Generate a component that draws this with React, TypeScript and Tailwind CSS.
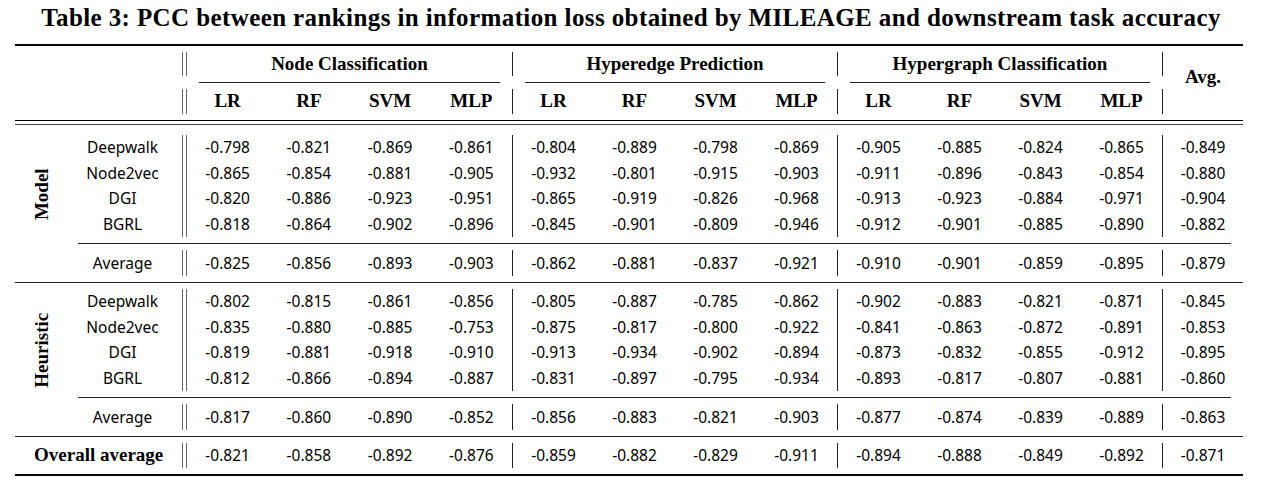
import React from "react";

type Row = { name: string; vals: string[] };

const modelRows: Row[] = [
  { name: "Deepwalk", vals: ["-0.798", "-0.821", "-0.869", "-0.861", "-0.804", "-0.889", "-0.798", "-0.869", "-0.905", "-0.885", "-0.824", "-0.865", "-0.849"] },
  { name: "Node2vec", vals: ["-0.865", "-0.854", "-0.881", "-0.905", "-0.932", "-0.801", "-0.915", "-0.903", "-0.911", "-0.896", "-0.843", "-0.854", "-0.880"] },
  { name: "DGI", vals: ["-0.820", "-0.886", "-0.923", "-0.951", "-0.865", "-0.919", "-0.826", "-0.968", "-0.913", "-0.923", "-0.884", "-0.971", "-0.904"] },
  { name: "BGRL", vals: ["-0.818", "-0.864", "-0.902", "-0.896", "-0.845", "-0.901", "-0.809", "-0.946", "-0.912", "-0.901", "-0.885", "-0.890", "-0.882"] },
];
const modelAvg: Row = { name: "Average", vals: ["-0.825", "-0.856", "-0.893", "-0.903", "-0.862", "-0.881", "-0.837", "-0.921", "-0.910", "-0.901", "-0.859", "-0.895", "-0.879"] };

const heurRows: Row[] = [
  { name: "Deepwalk", vals: ["-0.802", "-0.815", "-0.861", "-0.856", "-0.805", "-0.887", "-0.785", "-0.862", "-0.902", "-0.883", "-0.821", "-0.871", "-0.845"] },
  { name: "Node2vec", vals: ["-0.835", "-0.880", "-0.885", "-0.753", "-0.875", "-0.817", "-0.800", "-0.922", "-0.841", "-0.863", "-0.872", "-0.891", "-0.853"] },
  { name: "DGI", vals: ["-0.819", "-0.881", "-0.918", "-0.910", "-0.913", "-0.934", "-0.902", "-0.894", "-0.873", "-0.832", "-0.855", "-0.912", "-0.895"] },
  { name: "BGRL", vals: ["-0.812", "-0.866", "-0.894", "-0.887", "-0.831", "-0.897", "-0.795", "-0.934", "-0.893", "-0.817", "-0.807", "-0.881", "-0.860"] },
];
const heurAvg: Row = { name: "Average", vals: ["-0.817", "-0.860", "-0.890", "-0.852", "-0.856", "-0.883", "-0.821", "-0.903", "-0.877", "-0.874", "-0.839", "-0.889", "-0.863"] };

const overall: Row = { name: "Overall average", vals: ["-0.821", "-0.858", "-0.892", "-0.876", "-0.859", "-0.882", "-0.829", "-0.911", "-0.894", "-0.888", "-0.849", "-0.892", "-0.871"] };

const serifBold = "font-['Liberation_Serif',serif] font-bold";
const sans = "font-['Noto_Sans',sans-serif]";

const DoubleBar = () => <div className="w-[5px] self-stretch border-x border-[#666]" />;
const Bar = () => <div className="w-px self-stretch bg-[#222]" />;

function ValueCol({ rows, idx, width }: { rows: Row[]; idx: number; width: string }) {
  return (
    <div className={`flex flex-col ${width}`}>
      {rows.map((r, j) => (
        <div key={j} className="flex h-[25.6px] items-center justify-center">
          {r.vals[idx]}
        </div>
      ))}
    </div>
  );
}

function Band({ rows, className }: { rows: Row[]; className?: string }) {
  const group = (start: number, w: string) =>
    [0, 1, 2, 3].map((k) => <ValueCol key={start + k} rows={rows} idx={start + k} width={w} />);
  return (
    <div className={`flex text-[15.5px] text-black ${sans} ${className ?? ""}`}>
      <div className="flex w-[104px] flex-col pr-[15px]">
        {rows.map((r) => (
          <div key={r.name} className="flex h-[25.6px] items-center justify-center">
            {r.name}
          </div>
        ))}
      </div>
      <DoubleBar />
      {group(0, "w-[81.25px]")}
      <Bar />
      {group(4, "w-[81px]")}
      <Bar />
      {group(8, "w-[81px]")}
      <Bar />
      <ValueCol rows={rows} idx={12} width="w-[80px]" />
    </div>
  );
}

function Group({ label, rows, avg, pad }: { label: string; rows: Row[]; avg: Row; pad: string }) {
  return (
    <div className="flex">
      <div className="flex w-[63px] items-center justify-center pb-[18px] pr-[9px]">
        <span className={`-rotate-90 whitespace-nowrap text-[19px] ${serifBold}`}>{label}</span>
      </div>
      <div className="flex flex-1 flex-col">
        <Band rows={rows} className={pad} />
        <div className="mr-[12px] h-px bg-[#222]" />
        <Band rows={[avg]} className="py-[6px]" />
      </div>
    </div>
  );
}

function HeaderGroup({ title, w }: { title: string; w: string }) {
  return (
    <div className={`flex flex-col ${w}`}>
      <div className="flex h-[36px] items-center justify-center">{title}</div>
      <div className="mx-[12px] h-px bg-[#222]" />
      <div className="flex h-[37px] items-center">
        {["LR", "RF", "SVM", "MLP"].map((c) => (
          <div key={c} className="flex-1 text-center">
            {c}
          </div>
        ))}
      </div>
    </div>
  );
}

function HeaderBar({ double }: { double?: boolean }) {
  const seg = double ? "w-[5px] border-x border-[#666]" : "w-px bg-[#222]";
  return (
    <div className="flex flex-col">
      <div className="flex h-[36px] py-[6px]">
        <div className={seg} />
      </div>
      <div className="h-px" />
      <div className="flex h-[37px] py-[6px]">
        <div className={seg} />
      </div>
    </div>
  );
}

export default function App() {
  return (
    <div className="h-[482px] w-[1262px] bg-white text-black">
      <div className={`flex h-[36px] items-center justify-center text-[25px] tracking-[0.016em] ${serifBold}`}>
        Table 3: PCC between rankings in information loss obtained by MILEAGE and downstream task accuracy
      </div>
      <div className="ml-[15px] mt-[8px] w-[1228px]">
        <div className="h-[2px] bg-black" />
        <div className={`flex text-[19px] ${serifBold}`}>
          <div className="w-[167px]" />
          <HeaderBar double />
          <HeaderGroup title="Node Classification" w="w-[325px]" />
          <HeaderBar />
          <HeaderGroup title="Hyperedge Prediction" w="w-[324px]" />
          <HeaderBar />
          <HeaderGroup title="Hypergraph Classification" w="w-[324px]" />
          <HeaderBar />
          <div className="flex w-[80px] items-center justify-center pb-[12px]">Avg.</div>
        </div>
        <div className="h-px bg-black" />
        <div className="h-[3px]" />
        <div className="h-px bg-[#444]" />
        <Group label="Model" rows={modelRows} avg={modelAvg} pad="pb-[6px] pt-[10px]" />
        <div className="h-px bg-[#222]" />
        <Group label="Heuristic" rows={heurRows} avg={heurAvg} pad="pb-[6px] pt-[6px]" />
        <div className="h-px bg-[#222]" />
        <div className={`flex py-[6px] text-[15.5px] ${sans}`}>
          <div className={`flex h-[25px] w-[167px] items-center pl-[19px] text-[19px] ${serifBold}`}>
            Overall average
          </div>
          <div className="flex flex-1">
            <DoubleBar />
            {overall.vals.map((v, i) => (
              <React.Fragment key={i}>
                {(i === 4 || i === 8 || i === 12) && <Bar />}
                <div
                  className={`flex h-[25px] items-center justify-center ${
                    i < 4 ? "w-[81.25px]" : i === 12 ? "w-[80px]" : "w-[81px]"
                  }`}
                >
                  {v}
                </div>
              </React.Fragment>
            ))}
          </div>
        </div>
        <div className="h-[2px] bg-black" />
      </div>
    </div>
  );
}
